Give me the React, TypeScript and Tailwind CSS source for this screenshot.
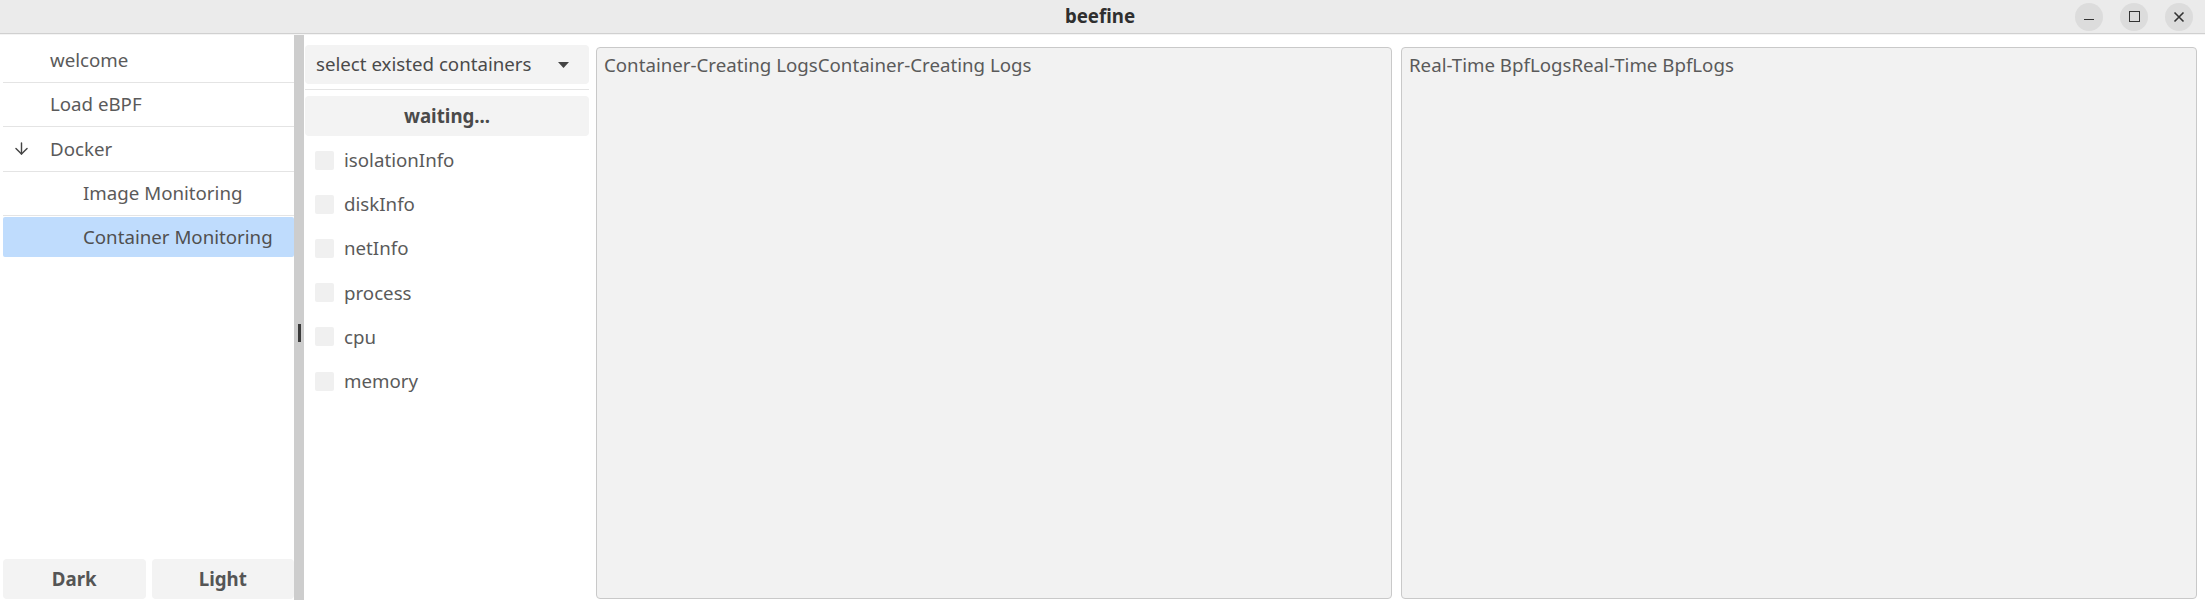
import { ArrowDown } from "lucide-react";

const navItems = [
  { label: "welcome", indent: false, arrow: false, active: false },
  { label: "Load eBPF", indent: false, arrow: false, active: false },
  { label: "Docker", indent: false, arrow: true, active: false },
  { label: "Image Monitoring", indent: true, arrow: false, active: false },
  { label: "Container Monitoring", indent: true, arrow: false, active: true },
];

const checks = ["isolationInfo", "diskInfo", "netInfo", "process", "cpu", "memory"];

const App = () => {
  return (
    <div className="w-[2205px] h-[600px] flex flex-col bg-white overflow-hidden font-['Noto_Sans',sans-serif] text-[18.7px] text-[#5a5a5a]">
      {/* Title bar */}
      <div className="h-[34px] shrink-0 bg-[#ebebeb] border-b border-[#d0d0d0] flex items-center relative">
        <div className="flex-1 text-center font-bold text-[#2f2f2f] pr-[5px]">beefine</div>
        <div className="absolute right-[12px] top-0 h-full flex items-center gap-[17px]">
          <button className="w-[28px] h-[28px] rounded-full bg-[#dcdcdc] flex items-center justify-center">
            <span className="block w-[10px] h-[1.5px] bg-[#333] mt-[6px]"></span>
          </button>
          <button className="w-[28px] h-[28px] rounded-full bg-[#dcdcdc] flex items-center justify-center">
            <span className="block w-[11px] h-[11px] border-[1.5px] border-[#333]"></span>
          </button>
          <button className="w-[28px] h-[28px] rounded-full bg-[#dcdcdc] flex items-center justify-center">
            <svg width="12" height="12" viewBox="0 0 12 12">
              <path d="M1.5 1.5 L10.5 10.5 M10.5 1.5 L1.5 10.5" stroke="#333" strokeWidth="1.6" />
            </svg>
          </button>
        </div>
      </div>

      <div className="flex-1 flex min-h-0 border-t border-[#f4f4f4] pr-[8px]">
        {/* Sidebar */}
        <div className="w-[294px] shrink-0 flex flex-col pt-[3px]">
          <div className="flex flex-col">
            {navItems.map((item) =>
              item.active ? (
                <div key={item.label} className="h-[40px] ml-[3px] mt-[1px] rounded-[2px] bg-[#bfdcfd] flex items-center pl-[80px] text-[#505050]">
                  {item.label}
                </div>
              ) : (
                <div key={item.label} className="h-[44.5px] border-b border-[#e4e4e4] ml-[3px] flex items-center">
                  <div className="w-[47px] flex justify-center pr-[10px]">
                    {item.arrow && <ArrowDown size={19} strokeWidth={1.8} className="text-[#444]" />}
                  </div>
                  <span className={item.indent ? "pl-[33px]" : ""}>{item.label}</span>
                </div>
              )
            )}
          </div>
          <div className="flex-1"></div>
          <div className="flex gap-[6px] pl-[3px] pb-[1px]">
            <button className="flex-1 h-[40px] rounded-[4px] bg-[#f3f3f3] font-bold text-[#555]">Dark</button>
            <button className="flex-1 h-[40px] rounded-[4px] bg-[#f3f3f3] font-bold text-[#555]">Light</button>
          </div>
        </div>

        {/* Splitter */}
        <div className="w-[10px] shrink-0 bg-[#cdcdcd] flex items-center justify-center">
          <div className="w-[3px] h-[18px] bg-[#3a3a3a] mt-[30px]"></div>
        </div>

        {/* Controls column */}
        <div className="w-[285px] shrink-0 flex flex-col pl-[1px] pt-[10px]">
          <div className="h-[39px] rounded-[4px] bg-[#f3f3f3] flex items-center justify-between pl-[11px] pr-[20px]">
            <span className="text-[#4a4a4a]">select existed containers</span>
            <svg width="11" height="6" viewBox="0 0 11 6">
              <path d="M0 0 L11 0 L5.5 6 Z" fill="#444" />
            </svg>
          </div>
          <div className="h-[1px] bg-[#e4e4e4] mt-[5px]"></div>
          <button className="h-[40px] mt-[6px] rounded-[4px] bg-[#f3f3f3] font-bold text-[#4a4a4a]">waiting...</button>
          <div className="flex flex-col mt-[2px]">
            {checks.map((c) => (
              <label key={c} className="h-[44.2px] flex items-center pl-[10px] gap-[10px]">
                <span className="block w-[19px] h-[19px] rounded-[2px] bg-[#f0f0f0]"></span>
                <span>{c}</span>
              </label>
            ))}
          </div>
        </div>

        {/* Log panels */}
        <div className="flex-1 flex gap-[9px] pl-[7px] pt-[12px] pb-[1px]">
          <div className="flex-1 rounded-[4px] border border-[#c9c9c9] bg-[#f2f2f2] px-[7px] py-[3px]">
            Container-Creating LogsContainer-Creating Logs
          </div>
          <div className="flex-1 rounded-[4px] border border-[#c9c9c9] bg-[#f2f2f2] px-[7px] py-[3px]">
            Real-Time BpfLogsReal-Time BpfLogs
          </div>
        </div>
      </div>
    </div>
  );
};

export default App;
